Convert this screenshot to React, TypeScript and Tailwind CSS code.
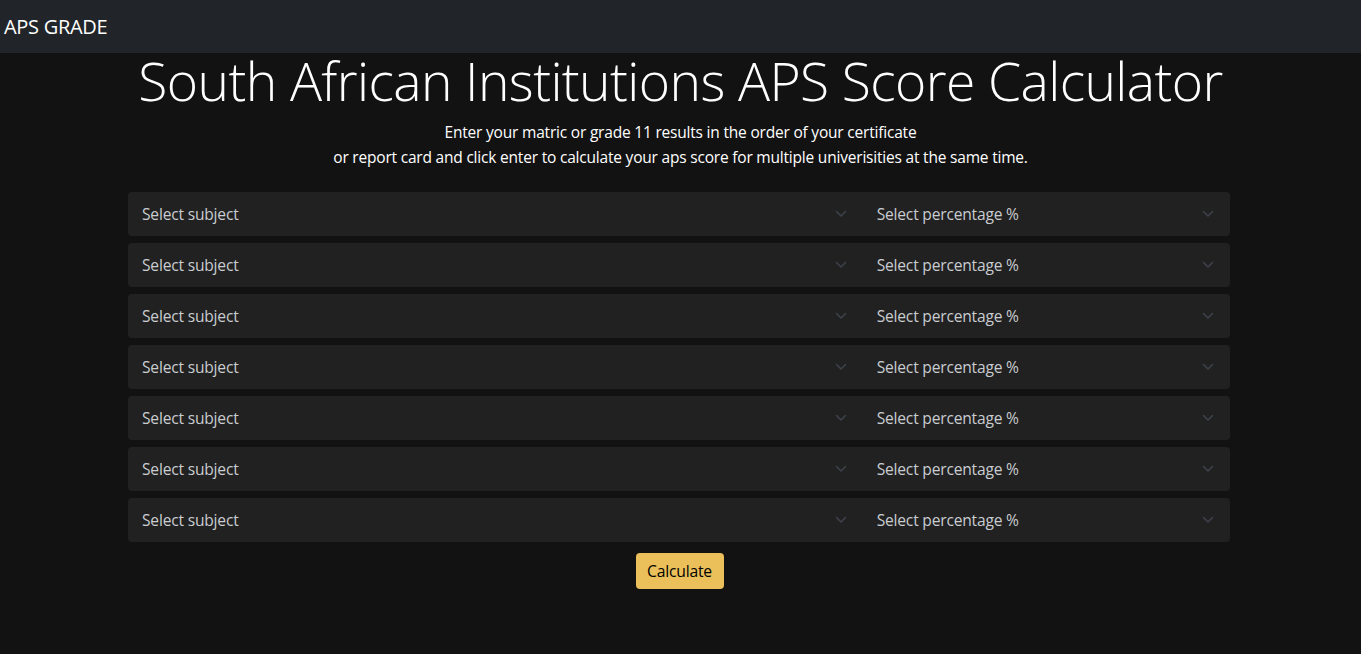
import React from 'react';

const Chevron: React.FC = () => (
  <svg width="12" height="8" viewBox="0 0 12 8" fill="none" className="shrink-0">
    <path d="M1.5 1.5 6 6l4.5-4.5" stroke="#3d424a" strokeWidth="1.5" strokeLinecap="round" strokeLinejoin="round" />
  </svg>
);

const SubjectRow: React.FC = () => (
  <div className="flex h-[44px] rounded-[4px] bg-[#212121]">
    <div className="flex w-2/3 items-center justify-between pl-[14px] pr-[16px]">
      <span className="pt-[2px]">Select subject</span>
      <Chevron />
    </div>
    <div className="flex w-1/3 items-center justify-between pl-[14px] pr-[16px]">
      <span className="pt-[2px]">Select percentage %</span>
      <Chevron />
    </div>
  </div>
);

export default function App() {
  const rows = [0, 1, 2, 3, 4, 5, 6];

  return (
    <div className="min-h-[654px] bg-[#121212] font-['Open_Sans','Noto_Sans',sans-serif] text-white">
      <nav className="flex h-[53px] items-center bg-[#212529] px-[4px]">
        <span className="text-[20px] tracking-[-0.3px]">APS GRADE</span>
      </nav>

      <div className="flex flex-col items-center">
        <h1 className="-mt-[2px] text-[53.4px] font-light leading-[60px] tracking-[-0.6px]">
          South African Institutions APS Score Calculator
        </h1>
        <p className="mt-[9px] text-center text-[15.5px] leading-[25px] tracking-[-0.2px]">
          Enter your matric or grade 11 results in the order of your certificate
          <br />
          or report card and click enter to calculate your aps score for multiple univerisities at the same time.
        </p>

        <div className="mr-[3px] mt-[22px] flex w-[1102px] flex-col gap-[7px] text-[15.6px] text-[#c9ccd0] tracking-[-0.2px]">
          {rows.map((r) => (
            <SubjectRow key={r} />
          ))}
        </div>

        <button className="mr-[2px] mt-[11px] h-[36px] w-[88px] rounded-[4px] bg-[#ebc05a] pt-[1px] text-[15.7px] text-black tracking-[-0.2px]">
          Calculate
        </button>
      </div>
    </div>
  );
}
